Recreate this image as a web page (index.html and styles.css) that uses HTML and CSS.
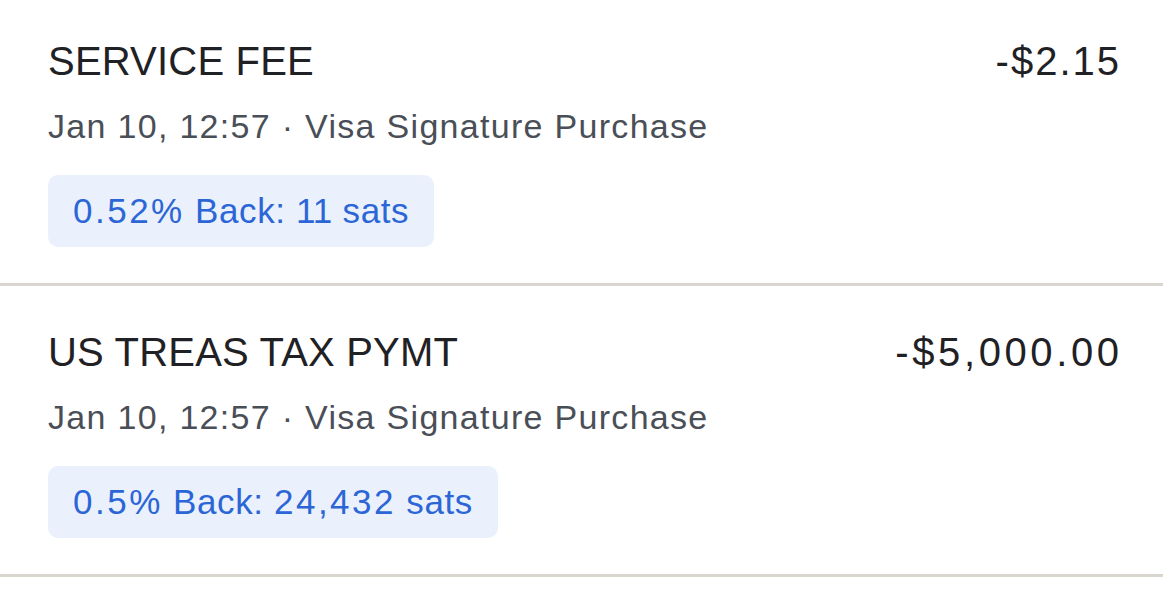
FILE: index.html
```html
<!DOCTYPE html>
<html>
<head>
<meta charset="utf-8">
<link rel="stylesheet" href="styles.css">
</head>
<body>
<div class="list">
  <div class="row">
    <div class="top">
      <span class="title">SERVICE FEE</span>
      <span class="amount amount-short">-$2.15</span>
    </div>
    <div class="meta">Jan 10, 12:57 · Visa Signature Purchase</div>
    <div class="pill"><span class="num">0.52%</span> Back: <span class="num num-ones">11</span> sats</div>
  </div>
  <div class="row">
    <div class="top">
      <span class="title">US TREAS TAX PYMT</span>
      <span class="amount">-$5,000.00</span>
    </div>
    <div class="meta">Jan 10, 12:57 · Visa Signature Purchase</div>
    <div class="pill"><span class="num">0.5%</span> Back: <span class="num">24,432</span> sats</div>
  </div>
</div>
</body>
</html>
```
FILE: styles.css
```css
html, body {
  margin: 0;
  padding: 0;
  background: #ffffff;
}
body {
  font-family: "Liberation Sans", Arial, sans-serif;
  overflow: hidden;
}
.row {
  padding: 42px 44px 36px 48px;
  border-bottom: 3px solid #d8d6cf;
}
.row:first-child {
  padding-top: 37px;
}
.top {
  display: flex;
  justify-content: space-between;
  align-items: baseline;
  font-size: 40px;
  line-height: 48px;
  color: #1f2125;
}
.title {
  letter-spacing: 0.2px;
}
.amount {
  letter-spacing: 3.6px;
  margin-right: -3.6px;
}
.amount-short {
  letter-spacing: 2px;
  margin-right: -2px;
}
.meta {
  margin-top: 21px;
  font-size: 34px;
  line-height: 40px;
  color: #4a4f57;
  letter-spacing: 1.3px;
}
.pill {
  display: inline-block;
  margin-top: 29px;
  padding: 0 25px;
  height: 72px;
  line-height: 72px;
  font-size: 35px;
  letter-spacing: 0.6px;
  color: #2c66d6;
  background: #eaf1fd;
  border-radius: 10px;
}
.num {
  letter-spacing: 2.5px;
}
.num-ones {
  letter-spacing: 0;
}
```
